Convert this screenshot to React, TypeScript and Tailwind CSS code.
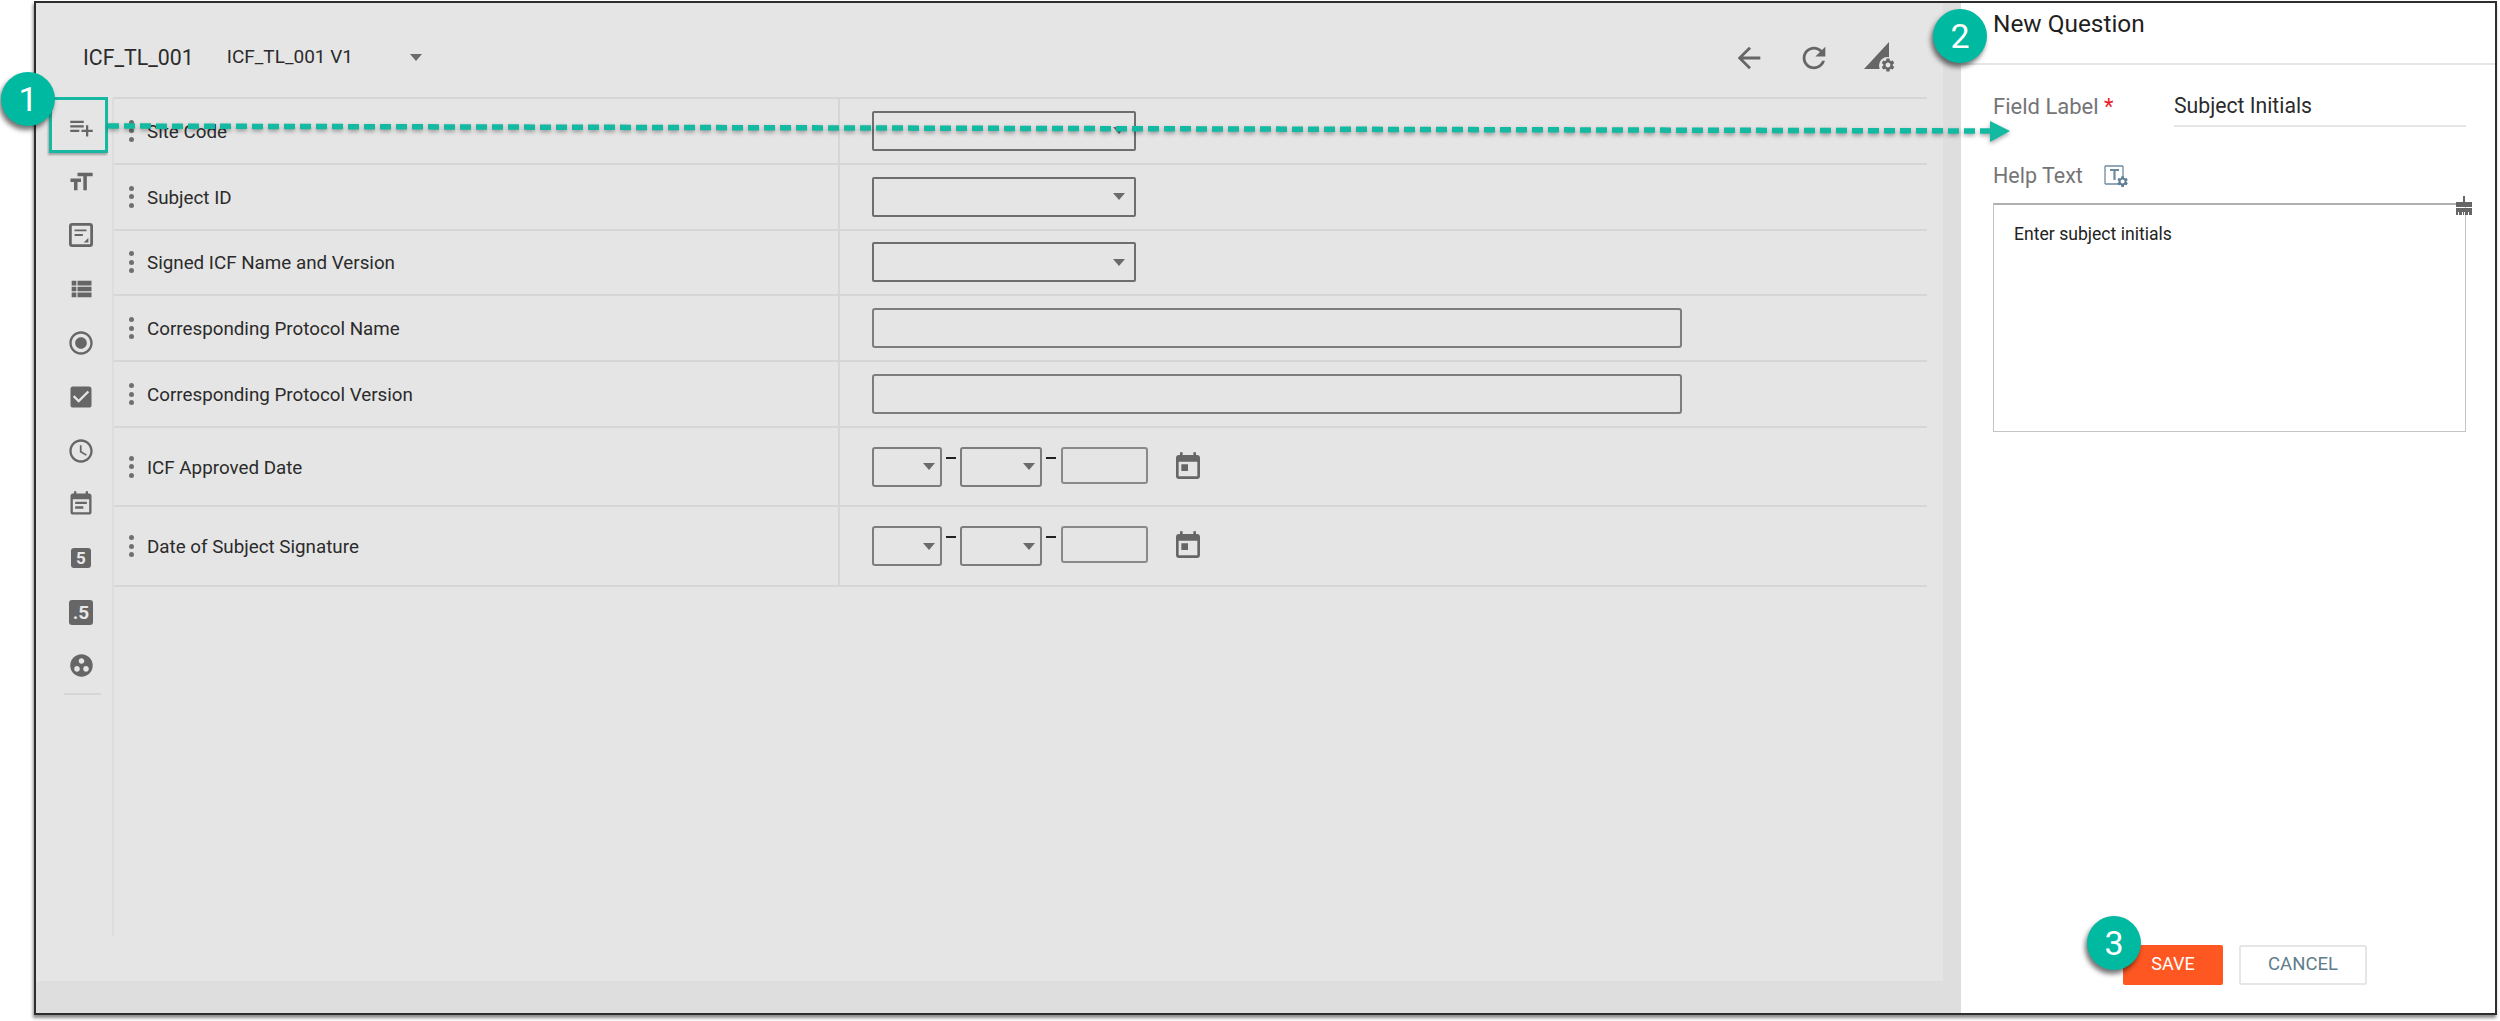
import React from "react";

const P: Record<string, string> = {
  playlist: "M14 10H2v2h12v-2zm0-4H2v2h12V6zm4 8v-4h-2v4h-4v2h4v4h2v-4h4v-2h-4zM2 16h8v-2H2v2z",
  size: "M9 4v3h5v12h3V7h5V4H9zm-6 8h3v7h3v-7h3V9H3v3z",
  list: "M4 14h4v-4H4v4zm0 5h4v-4H4v4zM4 9h4V5H4v4zm5 5h12v-4H9v4zm0 5h12v-4H9v4zM9 5v4h12V5H9z",
  radio: "M12 7c-2.76 0-5 2.24-5 5s2.24 5 5 5 5-2.24 5-5-2.24-5-5-5zm0-5C6.48 2 2 6.48 2 12s4.48 10 10 10 10-4.48 10-10S17.52 2 12 2zm0 18c-4.42 0-8-3.58-8-8s3.58-8 8-8 8 3.58 8 8-3.58 8-8 8z",
  check: "M19 3H5c-1.11 0-2 .9-2 2v14c0 1.1.89 2 2 2h14c1.11 0 2-.9 2-2V5c0-1.1-.89-2-2-2zm-9 14l-5-5 1.41-1.41L10 14.17l7.59-7.59L19 8l-9 9z",
  clock: "M11.99 2C6.47 2 2 6.48 2 12s4.47 10 9.99 10C17.52 22 22 17.52 22 12S17.52 2 11.99 2zM12 20c-4.42 0-8-3.58-8-8s3.58-8 8-8 8 3.58 8 8-3.58 8-8 8zm.5-13H11v6l5.25 3.15.75-1.23-4.5-2.67z",
  note: "M17 10H7v2h10v-2zm2-7h-1V1h-2v2H8V1H6v2H5c-1.11 0-1.99.9-1.99 2L3 19c0 1.1.89 2 2 2h14c1.1 0 2-.9 2-2V5c0-1.1-.9-2-2-2zm0 16H5V8h14v11zm-5-5H7v2h7v-2z",
  today: "M19 3h-1V1h-2v2H8V1H6v2H5c-1.11 0-1.99.9-1.99 2L3 19c0 1.1.89 2 2 2h14c1.1 0 2-.9 2-2V5c0-1.1-.9-2-2-2zm0 16H5V8h14v11zM7 10h5v5H7z",
  group: "M12 2C6.48 2 2 6.48 2 12s4.48 10 10 10 10-4.48 10-10S17.52 2 12 2zM8 17.5c-1.38 0-2.5-1.12-2.5-2.5s1.12-2.5 2.5-2.5 2.5 1.12 2.5 2.5-1.12 2.5-2.5 2.5zM9.5 8c0-1.38 1.12-2.5 2.5-2.5s2.5 1.12 2.5 2.5-1.12 2.5-2.5 2.5S9.5 9.38 9.5 8zm6.5 9.5c-1.38 0-2.5-1.12-2.5-2.5s1.12-2.5 2.5-2.5 2.5 1.12 2.5 2.5-1.12 2.5-2.5 2.5z",
  back: "M20 11H7.83l5.59-5.59L12 4l-8 8 8 8 1.41-1.41L7.83 13H20v-2z",
  refresh: "M17.65 6.35C16.2 4.9 14.21 4 12 4c-4.42 0-7.99 3.58-7.99 8s3.57 8 7.99 8c3.73 0 6.84-2.55 7.73-6h-2.08c-.82 2.33-3.04 4-5.65 4-3.31 0-6-2.69-6-6s2.69-6 6-6c1.66 0 3.14.69 4.22 1.78L13 11h7V4l-2.35 2.35z",
  gear: "M19.14 12.94c.04-.3.06-.61.06-.94 0-.32-.02-.64-.07-.94l2.03-1.58c.18-.14.23-.41.12-.61l-1.92-3.32c-.12-.22-.37-.29-.59-.22l-2.39.96c-.5-.38-1.03-.7-1.62-.94l-.36-2.54c-.04-.24-.24-.41-.48-.41h-3.84c-.24 0-.43.17-.47.41l-.36 2.54c-.59.24-1.13.57-1.62.94l-2.39-.96c-.22-.08-.47 0-.59.22L2.74 8.87c-.12.21-.08.47.12.61l2.03 1.58c-.05.3-.09.63-.09.94s.02.64.07.94l-2.03 1.58c-.18.14-.23.41-.12.61l1.92 3.32c.12.22.37.29.59.22l2.39-.96c.5.38 1.03.7 1.62.94l.36 2.54c.05.24.24.41.48.41h3.84c.24 0 .44-.17.47-.41l.36-2.54c.59-.24 1.13-.56 1.62-.94l2.39.96c.22.08.47 0 .59-.22l1.92-3.32c.12-.22.07-.47-.12-.61l-2.01-1.58zM12 15.6c-1.98 0-3.6-1.62-3.6-3.6s1.62-3.6 3.6-3.6 3.6 1.62 3.6 3.6-1.62 3.6-3.6 3.6z",
};

function Ic({ d, c = "w-8 h-8" }: { d: string; c?: string }) {
  return (
    <svg viewBox="0 0 24 24" className={c + " fill-[#666666]"}>
      <path d={d} />
    </svg>
  );
}

function NoteBox() {
  return (
    <svg viewBox="0 0 26 26" className="w-[24px] h-[24px]">
      <rect x="1.5" y="1.5" width="23" height="23" rx="2" fill="none" stroke="#666666" strokeWidth="3" />
      <path d="M6 7h13v2H6zM6 12h9v2H6zM21 16v5h-5z" fill="#666666" />
    </svg>
  );
}

function NumBox({ text, c }: { text: string; c: string }) {
  return (
    <div className={c + " flex items-center justify-center rounded-[3px] bg-[#666666] text-[#e8e8e8] font-bold leading-none font-['Roboto',sans-serif]"}>
      {text}
    </div>
  );
}

function SidebarItem({ children }: { children: React.ReactNode }) {
  return <div className="h-[53.8px] flex items-center justify-center">{children}</div>;
}

function Dots() {
  return (
    <div className="flex flex-col gap-[3.5px] w-[6px] items-center shrink-0">
      <span className="w-[5px] h-[5px] rounded-full bg-[#707070]" />
      <span className="w-[5px] h-[5px] rounded-full bg-[#707070]" />
      <span className="w-[5px] h-[5px] rounded-full bg-[#707070]" />
    </div>
  );
}

function Caret({ c = "" }: { c?: string }) {
  return <span className={"w-0 h-0 border-x-[6.5px] border-x-transparent border-t-[7px] border-t-[#6b6b6b] " + c} />;
}

function Sel({ w }: { w: string }) {
  return (
    <div className={w + " h-[40px] border-2 border-[#7d7d7d] rounded-[3px] flex items-center justify-end pr-[5px]"}>
      <Caret />
    </div>
  );
}

function DateField() {
  return (
    <div className="flex items-center">
      <Sel w="w-[70px]" />
      <span className="w-[10px] h-[2px] bg-[#222222] mx-[4px] mb-[18px]" />
      <Sel w="w-[82px]" />
      <span className="w-[10px] h-[2px] bg-[#222222] mx-[4px] mb-[18px]" />
      <div className="w-[87px] h-[37px] border-2 border-[#8a8a8a] rounded-[3px] mb-[3px] ml-[1px]" />
      <div className="ml-[24px]">
        <Ic d={P.today} c="w-[32px] h-[32px]" />
      </div>
    </div>
  );
}

const rows: { label: string; kind: "sel" | "text" | "date" }[] = [
  { label: "Site Code", kind: "sel" },
  { label: "Subject ID", kind: "sel" },
  { label: "Signed ICF Name and Version", kind: "sel" },
  { label: "Corresponding Protocol Name", kind: "text" },
  { label: "Corresponding Protocol Version", kind: "text" },
  { label: "ICF Approved Date", kind: "date" },
  { label: "Date of Subject Signature", kind: "date" },
];

function Row({ label, kind }: { label: string; kind: "sel" | "text" | "date" }) {
  return (
    <div className={(kind === "date" ? "h-[79.4px]" : "h-[65.8px]") + " flex border-b-2 border-[#d6d6d6]"}>
      <div className="w-[724px] flex items-center pl-[14px] gap-[13px]">
        <Dots />
        <span className="text-[18.8px] text-[#2b2b2b] pt-[2px]">{label}</span>
      </div>
      <div className="flex-1 border-l-2 border-[#d6d6d6] flex items-center pl-[31.5px]">
        {kind === "sel" && (
          <div className="w-[264px] h-[40px] border-2 border-[#6e6e6e] rounded-[2px] flex items-center justify-end pr-[9px]">
            <Caret />
          </div>
        )}
        {kind === "text" && <div className="w-[810px] h-[40px] border-2 border-[#7d7d7d] rounded-[3px]" />}
        {kind === "date" && <DateField />}
      </div>
    </div>
  );
}

function Badge({ n, c }: { n: string; c: string }) {
  return (
    <div className={c + " absolute w-[54px] h-[54px] rounded-full bg-[#00b9a1] text-white text-[34px] flex items-center justify-center shadow-[-2px_4px_5px_rgba(0,0,0,0.55)]"}>
      {n}
    </div>
  );
}

export default function App() {
  return (
    <div className="w-[2500px] h-[1021px] bg-white relative overflow-hidden pl-[34px] pt-[1px] font-['Roboto',sans-serif]">
      <div className="w-[2463px] h-[1014px] border-2 border-[#2e2e2e] flex shadow-[-1px_3px_3px_rgba(0,0,0,0.45)] bg-white">
        {/* left work area */}
        <div className="w-[1925px] bg-[#dedede] flex flex-col shrink-0">
          <div className="flex-1 flex">
            <div className="w-[1907px] bg-[#e5e5e5] h-[978px] flex flex-col">
              <div className="h-[94px] flex items-center pl-[47px] pr-[47px] pt-[15px] shrink-0">
                <span className="text-[21.3px] text-[#2b2b2b]">ICF_TL_001</span>
                <span className="text-[19px] text-[#2b2b2b] ml-[33px]">ICF_TL_001 V1</span>
                <Caret c="ml-[57px]" />
                <div className="ml-auto flex items-center gap-[31px]">
                  <Ic d={P.back} c="w-[34px] h-[34px]" />
                  <Ic d={P.refresh} c="w-[34px] h-[34px]" />
                  <div className="relative w-[34px] h-[34px]">
                    <svg viewBox="0 0 34 34" className="w-[34px] h-[34px] fill-[#666666]">
                      <path d="M2 28 L27 1 V28Z" />
                    </svg>
                    <div className="absolute right-0 bottom-[1px] w-[17px] h-[17px] bg-[#e5e5e5] rounded-full flex items-center justify-center">
                      <Ic d={P.gear} c="w-[16px] h-[16px]" />
                    </div>
                  </div>
                </div>
              </div>
              <div className="flex flex-1">
                <div className="w-[78px] h-[839px] border-r-2 border-[#dddddd] pt-[4px] pl-[14px] flex flex-col shrink-0">
                  <SidebarItem><Ic d={P.playlist} c="w-[27px] h-[27px]" /></SidebarItem>
                  <SidebarItem><Ic d={P.size} c="w-[28px] h-[28px]" /></SidebarItem>
                  <SidebarItem><NoteBox /></SidebarItem>
                  <SidebarItem><Ic d={P.list} c="w-[28px] h-[28px]" /></SidebarItem>
                  <SidebarItem><Ic d={P.radio} c="w-[28px] h-[28px]" /></SidebarItem>
                  <SidebarItem><Ic d={P.check} c="w-[28px] h-[28px]" /></SidebarItem>
                  <SidebarItem><Ic d={P.clock} c="w-[28px] h-[28px]" /></SidebarItem>
                  <SidebarItem><Ic d={P.note} c="w-[28px] h-[28px]" /></SidebarItem>
                  <SidebarItem><NumBox text="5" c="w-[20px] h-[20px] text-[17px]" /></SidebarItem>
                  <SidebarItem><NumBox text=".5" c="w-[24px] h-[25px] text-[19px]" /></SidebarItem>
                  <SidebarItem><Ic d={P.group} c="w-[27px] h-[27px]" /></SidebarItem>
                  <div className="h-[2px] w-[37px] bg-[#d6d6d6] ml-[14px]" />
                </div>
                <div className="w-[1813px] shrink-0">
                  <div className="border-t-2 border-[#d6d6d6]" />
                  {rows.map((r) => (
                    <Row key={r.label} label={r.label} kind={r.kind} />
                  ))}
                </div>
              </div>
            </div>
          </div>
        </div>

        {/* right panel */}
        <div className="flex-1 flex flex-col">
          <div className="h-[62px] border-b-2 border-[#e6e6e6] pl-[32px] pt-[7px] text-[24.4px] text-[#1f1f1f] leading-[28px]">
            New Question
          </div>
          <div className="pl-[32px] pr-[29px] pt-[26px]">
            <div className="flex">
              <div className="w-[181px] pt-[1px] text-[22px] text-[#757575] leading-[30px]">
                Field Label <span className="text-[#e8202a]">*</span>
              </div>
              <div className="flex-1 h-[36px] border-b-2 border-[#e6e6e6] text-[21.2px] text-[#2b2b2b] leading-[30px]">
                Subject Initials
              </div>
            </div>
            <div className="flex items-center mt-[35px] h-[28px]">
              <span className="text-[21.5px] text-[#757575]">Help Text</span>
              <svg viewBox="0 0 26 24" className="ml-[20px] w-[26px] h-[24px]">
                <path d="M2 2h18M2 20h16M2 2v18M20 2v11" fill="none" stroke="#6d8ba0" strokeWidth="1.3" />
                <path d="M7 5h9v2h-3.4V16h-2.2V7H7z" fill="#6d8ba0" />
                <g transform="translate(13 11) scale(.55)">
                  <path d={P.gear} fill="#5f7f95" />
                </g>
              </svg>
            </div>
            <div className="relative mt-[13px] h-[229px] border border-[#c4c4c4] border-t-2 border-t-[#b0b0b0] pl-[20px] pt-[16px] text-[17.6px] text-[#222222]">
              Enter subject initials
              <svg viewBox="0 0 20 20" className="absolute right-[-9px] top-[-9px] w-[20px] h-[20px] fill-[#666666]">
                <path d="M9 0h2v6h7v5H2V6h7zM2 12h16v7h-3v-3h-1v3h-3v-3h-1v3H9v-3H8v3H5v-3H4v3H2z" />
              </svg>
            </div>
          </div>
          <div className="mt-auto pb-[28px] pl-[162px] flex gap-[16px]">
            <div className="w-[100px] h-[40px] bg-[#ff5722] rounded-[2px] text-white text-[18px] pb-[4px] flex items-center justify-center">
              SAVE
            </div>
            <div className="w-[128px] h-[40px] border-2 border-[#e6e6e6] rounded-[2px] text-[#607d8b] text-[18.5px] flex items-center justify-center">
              CANCEL
            </div>
          </div>
        </div>
      </div>

      {/* annotations */}
      <div className="absolute left-[49px] top-[97px] w-[59px] h-[56px] border-[3px] border-[#17b8a2] shadow-[-1px_2px_2px_rgba(0,0,0,0.3)]" />
      <svg viewBox="0 0 1910 30" className="absolute left-[104px] top-[118px] w-[1910px] h-[30px] drop-shadow-[0_2px_2px_rgba(0,0,0,0.35)]">
        <line x1="4" y1="8" x2="1888" y2="13" stroke="#13b9a1" strokeWidth="5.5" strokeDasharray="11 5" />
        <path d="M1886 3 L1906 13 L1886 24Z" fill="#13b9a1" />
      </svg>
      <Badge n="1" c="left-[1px] top-[72px]" />
      <Badge n="2" c="left-[1933px] top-[9px]" />
      <Badge n="3" c="left-[2087px] top-[916px]" />
    </div>
  );
}
